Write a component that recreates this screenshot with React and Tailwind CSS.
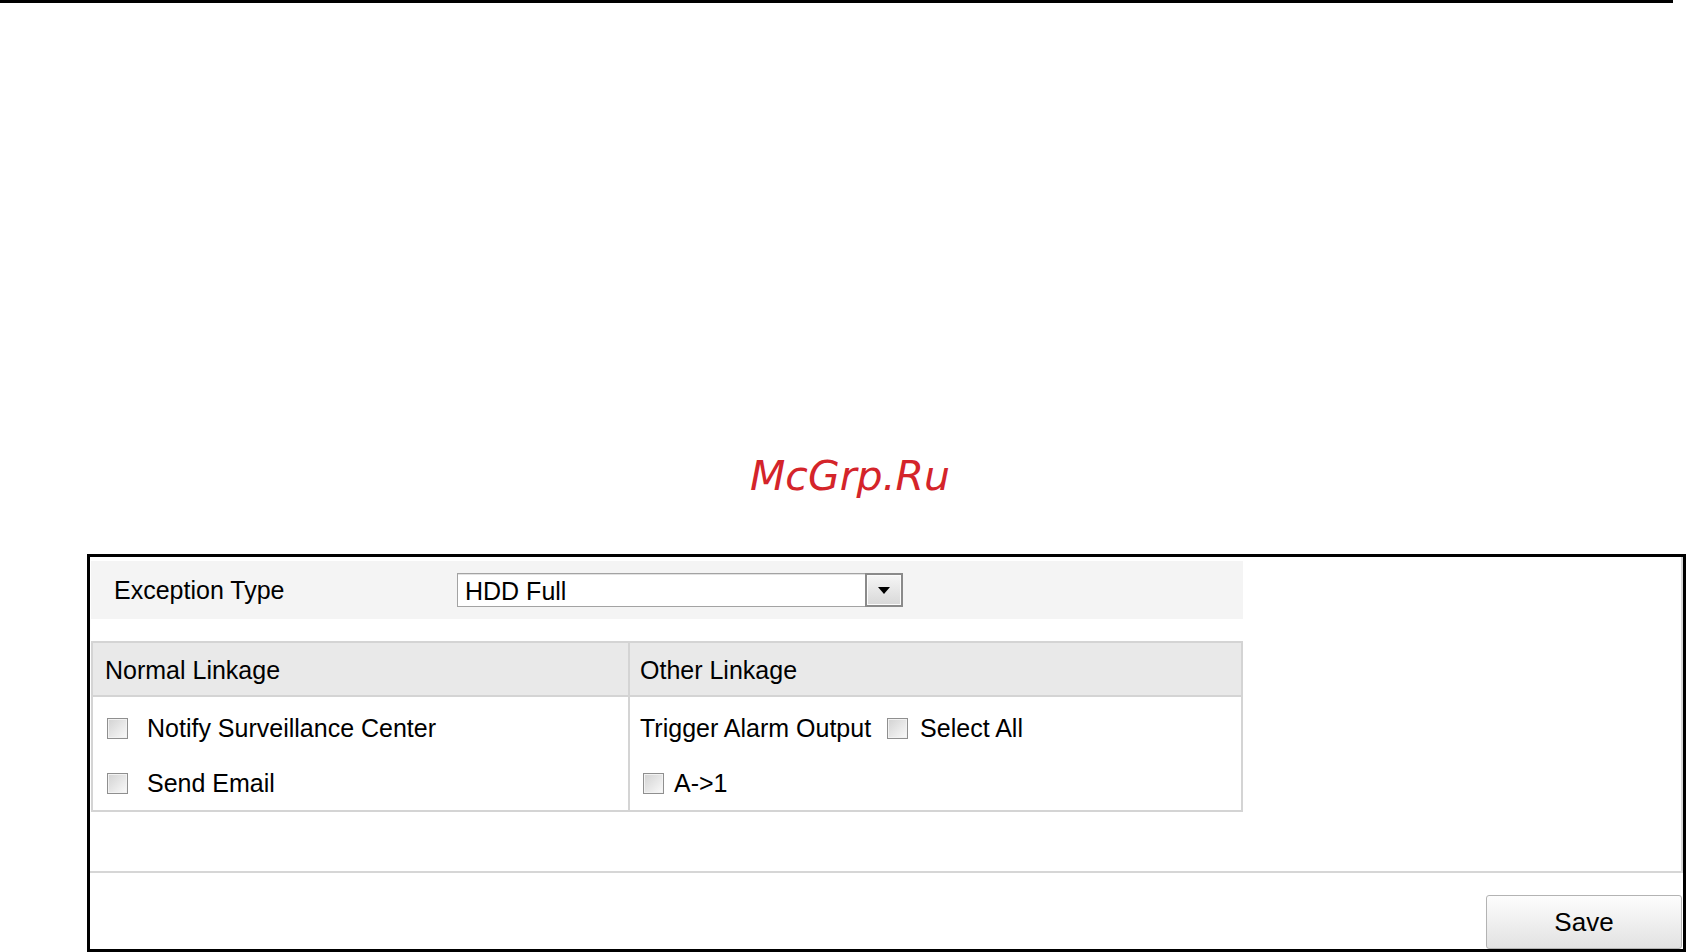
import React from 'react';

// Legacy-style checkbox used in the linkage table
const Box = ({ className = '' }) => (
    <span className={`inline-block w-[21px] h-[21px] shrink-0 border border-[#8f8f8f] bg-linear-to-br from-[#d2d2d2] to-[#fafafa] shadow-[inset_0_0_0_1px_#f2f2f2] ${className}`} />
);

const App = () => {
    return (
        <div className="relative w-[1686px] h-[952px] overflow-hidden bg-white text-black font-['Liberation_Sans',Arial,sans-serif]">
            <div className="h-[3px] w-[1673px] bg-black" />

            {/* watermark */}
            <div className="absolute left-[750px] top-[456px] text-[41px] leading-none italic text-[#d4242a] font-['DejaVu_Sans',sans-serif]">
                McGrp.Ru
            </div>

            <div className="mt-[551px] ml-[87px] w-[1599px] h-[398px] border-[3px] border-black flex flex-col">
                <div className="h-[316px] shrink-0 border-r-2 border-b-2 border-[#d6d6d6] pt-[4px] pl-px">
                    {/* exception type row */}
                    <div className="w-[1152px] h-[58px] bg-[#f4f4f4] flex items-center pl-[23px] text-[25px]">
                        <span className="w-[343px] pt-[2px]">Exception Type</span>
                        <div className="w-[446px] h-[34px] flex bg-white border border-[#a3a3a3] shadow-[inset_0_1px_0_#e2e2e2]">
                            <span className="flex-1 flex items-center pl-[7px] pt-[2px] leading-none">HDD Full</span>
                            <div className="w-[38px] h-[34px] -mt-px -mr-px border-2 border-[#8a8a8a] bg-linear-to-b from-[#f6f6f6] to-[#d8d8d8] flex items-center justify-center shadow-[inset_0_0_0_1px_#fbfbfb]">
                                <svg width="12" height="7" viewBox="0 0 12 7"><path d="M0 0h12L6 7z" fill="#000" /></svg>
                            </div>
                        </div>
                    </div>

                    {/* linkage table */}
                    <div className="mt-[22px] w-[1152px] h-[171px] border-2 border-[#d4d4d4] text-[25px]">
                        <div className="flex h-[54px] bg-[#e9e9e9] border-b-2 border-[#d4d4d4] pt-[3px]">
                            <div className="w-[537px] -mt-[3px] pt-[3px] border-r-2 border-[#d4d4d4] flex items-center pl-[12px]">Normal Linkage</div>
                            <div className="flex-1 flex items-center pl-[10px]">Other Linkage</div>
                        </div>
                        <div className="flex h-[113px]">
                            <div className="w-[537px] border-r-2 border-[#d4d4d4] pt-[4px] pl-[14px]">
                                <div className="h-[55px] flex items-center gap-[19px]"><Box />Notify Surveillance Center</div>
                                <div className="h-[55px] flex items-center gap-[19px]"><Box />Send Email</div>
                            </div>
                            <div className="flex-1 pt-[4px] pl-[10px]">
                                <div className="h-[55px] flex items-center">
                                    Trigger Alarm Output
                                    <Box className="ml-[16px] mr-[12px]" />
                                    Select All
                                </div>
                                <div className="h-[55px] flex items-center gap-[10px] pl-[3px]"><Box />A-&gt;1</div>
                            </div>
                        </div>
                    </div>
                </div>

                <div className="flex-1 flex justify-end items-start pt-[22px] pr-px">
                    <button className="w-[196px] h-[54px] rounded-[3px] border border-[#b3b3b3] bg-linear-to-b from-[#fdfdfd] to-[#e2e2e2] text-[26px] text-black leading-none">
                        Save
                    </button>
                </div>
            </div>
        </div>
    );
};

export default App;
